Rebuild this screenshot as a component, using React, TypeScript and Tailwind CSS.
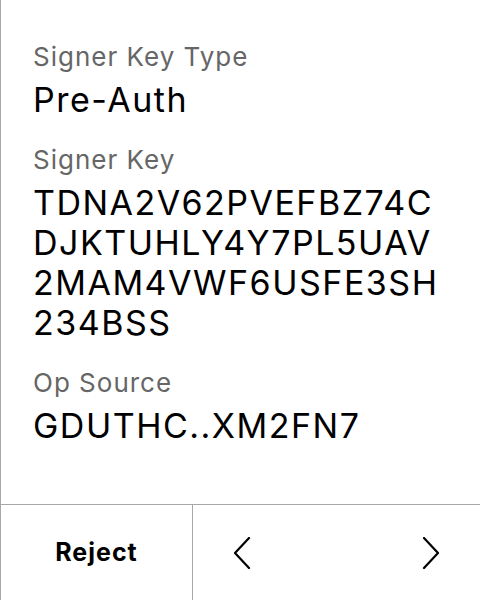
const fields = [
  { label: "Signer Key Type", value: ["Pre-Auth"] },
  {
    label: "Signer Key",
    value: ["TDNA2V62PVEFBZ74C", "DJKTUHLY4Y7PL5UAV", "2MAM4VWF6USFE3SH", "234BSS"],
  },
  { label: "Op Source", value: ["GDUTHC..XM2FN7"] },
];

function Chevron({ dir }: { dir: "left" | "right" }) {
  return (
    <svg width="18" height="32" viewBox="0 0 18 32" fill="none">
      <path
        d={dir === "left" ? "M16 1 L2 16 L16 31" : "M2 1 L16 16 L2 31"}
        stroke="#000"
        strokeWidth="2.2"
        strokeLinecap="round"
        strokeLinejoin="round"
      />
    </svg>
  );
}

export default function App() {
  return (
    <div className="flex h-[600px] w-[480px] flex-col border-l border-[#a8a8a8] bg-white font-['Inter',sans-serif] text-black">
      <main className="flex flex-1 flex-col gap-[25px] px-[32px] pt-[42px]">
        {fields.map((f) => (
          <div key={f.label} className="flex flex-col gap-[8px]">
            <div className="text-[26px] leading-[30px] tracking-[1px] text-[#666666]">{f.label}</div>
            <div className="text-[34px] leading-[40px] tracking-[1.5px]">
              {f.value.map((line) => (
                <div key={line}>{line}</div>
              ))}
            </div>
          </div>
        ))}
      </main>

      <footer className="flex h-[96px] border-t border-[#a8a8a8]">
        <button className="flex w-[192px] items-center justify-center border-r border-[#a8a8a8] text-[25px] font-bold tracking-[1px]">
          Reject
        </button>
        <div className="flex flex-1 items-center justify-between pl-[40px] pr-[40px]">
          <Chevron dir="left" />
          <Chevron dir="right" />
        </div>
      </footer>
    </div>
  );
}
